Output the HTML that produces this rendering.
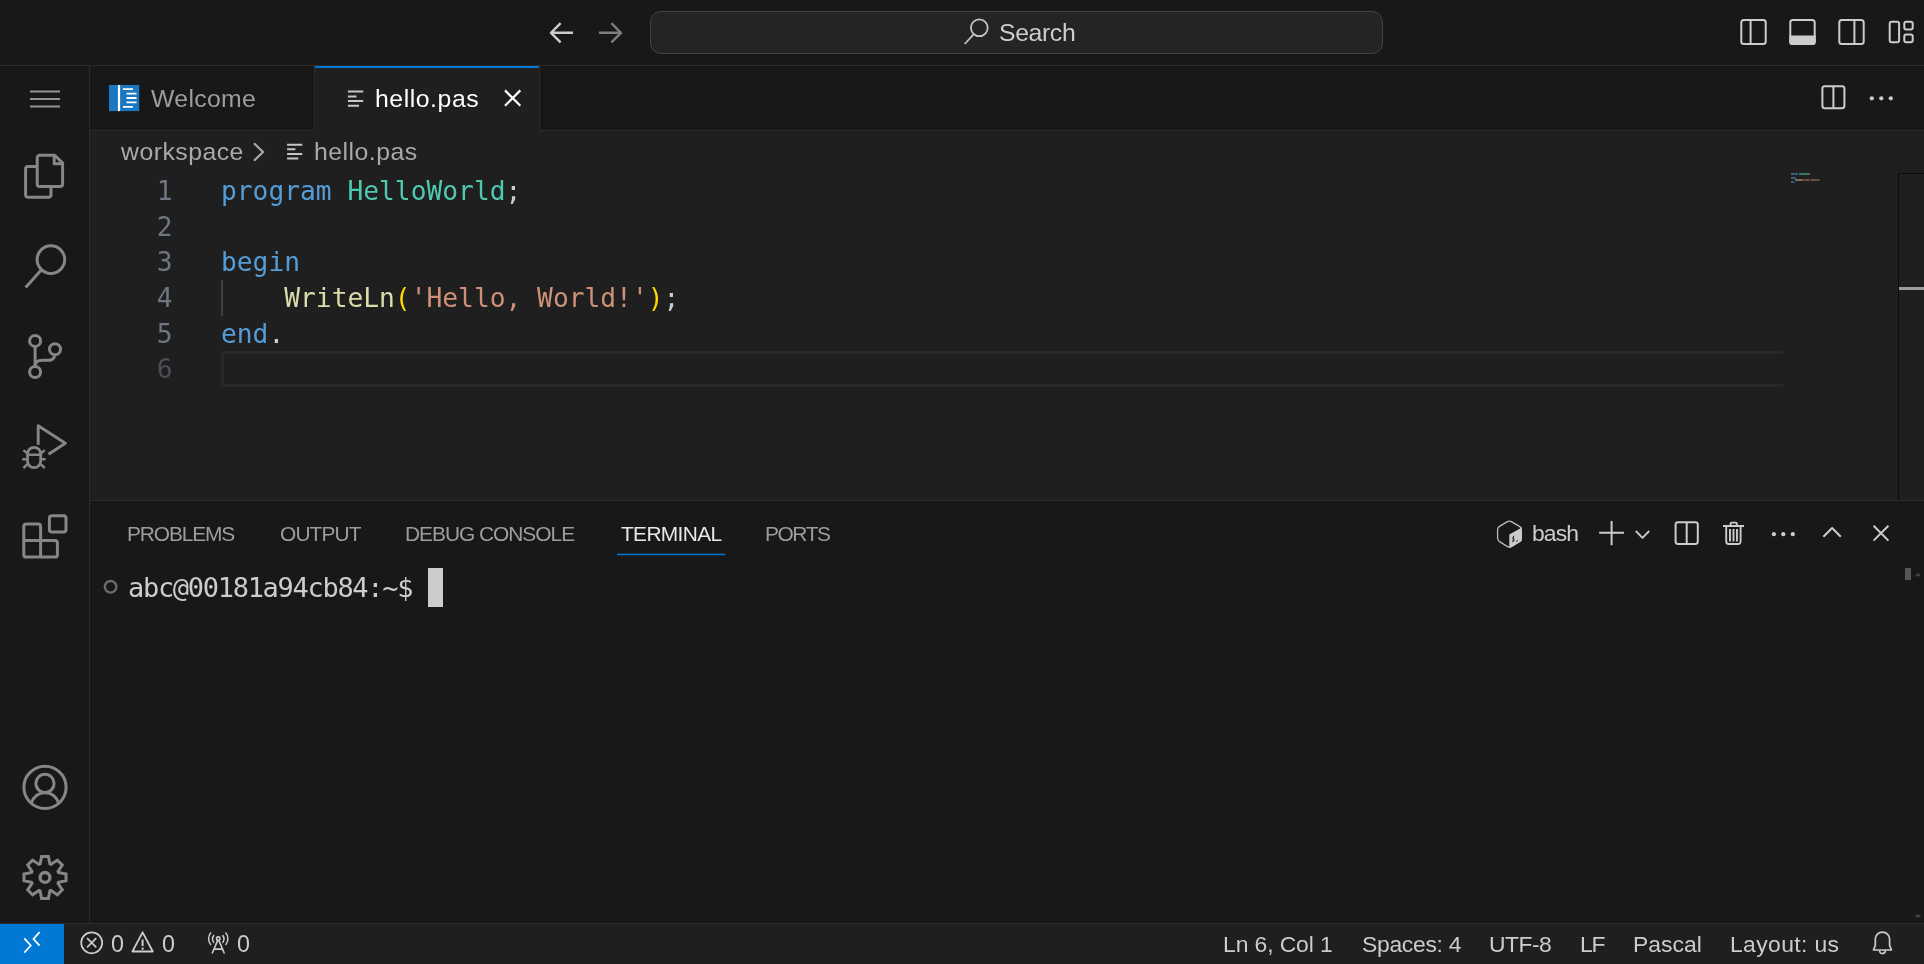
<!DOCTYPE html>
<html lang="en">
<head>
<meta charset="utf-8">
<title>hello.pas - workspace</title>
<style>
html,body{margin:0;padding:0;background:#181818;overflow:hidden;}
body{width:1924px;height:964px;position:relative;font-family:"Liberation Sans",sans-serif;color:#cccccc;-webkit-font-smoothing:antialiased;}
.abs,.t,.m,svg.i,.box{position:absolute;}
.t,.m{will-change:transform;}
.t{white-space:pre;line-height:1;font-size:25.3px;color:#cccccc;}
.t.p{font-size:21.4px;}.t.s{font-size:23.4px;}
.m{white-space:pre;line-height:1;font-family:"DejaVu Sans Mono","Liberation Mono",monospace;font-size:26.25px;}
svg.i{overflow:visible;fill:none;stroke:#868686;stroke-width:3;stroke-linecap:butt;stroke-linejoin:round;}
/* regions */
#titlebar{left:0;top:0;width:1924px;height:65px;background:#181818;border-bottom:1px solid #2b2b2b;}
#activity{left:0;top:66px;width:89px;height:857px;background:#181818;border-right:1px solid #2b2b2b;}
#tabs{left:90px;top:66px;width:1834px;height:64px;background:#181818;border-bottom:1px solid #2b2b2b;}
#editor{left:90px;top:131px;width:1834px;height:369px;background:#1f1f1f;}
#panel{left:90px;top:500px;width:1834px;height:423px;background:#181818;border-top:1px solid #2b2b2b;box-sizing:border-box;}
#status{left:0;top:923px;width:1924px;height:41px;background:#1f1f1f;border-top:1px solid #2b2b2b;box-sizing:border-box;}
</style>
</head>
<body>
<div id="titlebar" class="abs"></div>
<div id="activity" class="abs"></div>
<div id="tabs" class="abs"></div>
<div id="editor" class="abs"></div>
<div id="panel" class="abs"></div>
<div id="status" class="abs"></div>
<!--TITLEBAR-->
<svg class="i" style="left:540px;top:13px;stroke:#cccccc;stroke-width:2.4" width="40" height="40" viewBox="540 13 40 40"><path d="M573 32.8H551.5M560.6 23.2L551 32.8L560.6 42.4"/></svg>
<svg class="i" style="left:590px;top:13px;stroke:#7d7d7d;stroke-width:2.4" width="40" height="40" viewBox="590 13 40 40"><path d="M599 32.8H620.5M611.4 23.2L621 32.8L611.4 42.4"/></svg>
<div class="box" style="left:650px;top:11px;width:733px;height:43px;box-sizing:border-box;border:1px solid #434343;border-radius:11px;background:#242424;"></div>
<svg class="i" style="left:960px;top:16px;stroke:#c4c4c4;stroke-width:1.8" width="32" height="32" viewBox="960 16 32 32"><circle cx="979.3" cy="27.8" r="8.4"/><path d="M973.4 34.6L964.7 44"/></svg>
<div class="t" id="t_search" style="left:998.51px;top:21.40px;font-size:24.80px;letter-spacing:-0.379px;">Search</div>
<svg class="i" style="left:1736px;top:16px;stroke:#cccccc;stroke-width:2" width="180" height="32" viewBox="1736 16 180 32">
<rect x="1741.3" y="20" width="24.4" height="24" rx="2.5"/><path d="M1750.6 20V44"/>
<rect x="1790.3" y="20" width="24.4" height="24" rx="2.5"/><path d="M1790.3 36.5H1814.7V42a2 2 0 0 1-2 2H1792.3a2 2 0 0 1-2-2Z" fill="#cccccc"/>
<rect x="1839.3" y="20" width="24.4" height="24" rx="2.5"/><path d="M1854.4 20V44"/>
<rect x="1889.7" y="21.8" width="9.4" height="20.4" rx="2"/><rect x="1904.3" y="21.8" width="8.4" height="7.6" rx="2"/><rect x="1904.3" y="34.6" width="8.4" height="7.6" rx="2"/>
</svg>
<!--ACTIVITY-->
<svg class="i" style="left:0;top:66px;" width="90" height="858" viewBox="0 66 90 858">
<!-- menu -->
<path d="M30 91.4H60M30 99H60M30 106.4H60" stroke-width="2.05" stroke="#949494"/>
<!-- files -->
<path d="M37.2 166.6H28a2.4 2.4 0 0 0-2.4 2.4V194.9a2.4 2.4 0 0 0 2.4 2.4H48.6a2.4 2.4 0 0 0 2.4-2.4V186.4"/>
<path d="M54.8 155.3H39.6a2.4 2.4 0 0 0-2.4 2.4V184a2.4 2.4 0 0 0 2.4 2.4H60.2a2.4 2.4 0 0 0 2.4-2.4V163.1ZM54.2 155.6V163.7H62.3"/>
<!-- search -->
<circle cx="50.9" cy="259.6" r="13.8"/><path d="M41 270.3L25.6 287.4"/>
<!-- scm -->
<circle cx="35.100" cy="340.900" r="5.500"/><circle cx="35.100" cy="372" r="5.500"/><circle cx="55" cy="349.300" r="5.500"/>
<path d="M35.100 346.400V366.500M54.700 354.800c-.300 3.600-2.600 5.500-6.400 5.500H42.200c-4.200 0-7.100 1.900-7.100 5.900"/>
<!-- debug -->
<path d="M38.2 444.8V425.8L65.4 443.2L48.5 454.3" stroke-width="2.9"/>
<rect x="27.5" y="447.3" width="13.2" height="20.3" rx="6.6" ry="6.6" stroke-width="2.8"/>
<path d="M27.4 454.8H40.8M22.2 459.3H26.3M41.9 459.3H45.6M23.4 450.2L27.2 453.4M44.8 450.2L41 453.4M23.4 468L27.6 464.2M44.8 468L40.6 464.2" stroke-width="2.4"/>
<!-- extensions -->
<path d="M40.600 540.500V526.400a2.400 2.400 0 0 0-2.400-2.400H26.200a2.400 2.400 0 0 0-2.400 2.400V554.700a2.400 2.400 0 0 0 2.400 2.400H55a2.400 2.400 0 0 0 2.400-2.400V542.900a2.400 2.400 0 0 0-2.400-2.400H23.800M40.600 540.500V557.100"/>
<rect x="49.400" y="515.700" width="16.600" height="16.300" rx="2.400"/>
<!-- account -->
<circle cx="45" cy="787.3" r="21.1"/><circle cx="45" cy="783.4" r="9.1"/>
<path d="M31.2 803.4C33.4 797 38.4 792.8 45 792.8S56.6 797 58.8 803.4"/>
<!-- gear -->
<g transform="translate(45 877.4)" stroke-linejoin="miter"><circle r="4.9" stroke-width="3.3"/>
<path id="gearp" d="M-4.9 -13.4L-3.4 -21.0L3.4 -21.0L4.9 -13.4L6.0 -13.0L12.4 -17.3L17.3 -12.4L13.0 -6.0L13.4 -4.9L21.0 -3.4L21.0 3.4L13.4 4.9L13.0 6.0L17.3 12.4L12.4 17.3L6.0 13.0L4.9 13.4L3.4 21.0L-3.4 21.0L-4.9 13.4L-6.0 13.0L-12.4 17.3L-17.3 12.4L-13.0 6.0L-13.4 4.9L-21.0 3.4L-21.0 -3.4L-13.4 -4.9L-13.0 -6.0L-17.3 -12.4L-12.4 -17.3L-6.0 -13.0Z"/>
</g>
</svg>
<!--TABS-->
<div class="box" style="left:314px;top:66px;width:1px;height:64px;background:#2b2b2b;"></div>
<div class="box" style="left:315px;top:66px;width:224px;height:65px;background:#1f1f1f;"></div>
<div class="box" style="left:315px;top:66px;width:224px;height:2px;background:#0078d4;"></div>
<div class="box" style="left:539px;top:66px;width:1px;height:64px;background:#2b2b2b;"></div>
<!-- welcome icon -->
<svg class="i" style="left:109px;top:85px;stroke:none" width="31" height="27" viewBox="0 0 31 27"><rect width="30.2" height="26.1" fill="#1a78c2"/><rect x="8.9" y="0" width="2.2" height="26.1" fill="#ffffff"/><path d="M13.9 4.15H24M17.5 8.6H27.5M17.5 13H27.5M17.5 17.35H27.5M13.9 21.8H24" stroke="#ffffff" stroke-width="1.8"/></svg>
<div class="t" id="t_welcome" style="left:150.80px;top:87.20px;color:#9d9d9d;font-size:24.80px;letter-spacing:0.315px;">Welcome</div>
<svg class="i" style="left:347px;top:88px;stroke:#c8c8c8;stroke-width:2" width="20" height="22" viewBox="347 88 20 22"><path d="M347.9 91.6H363.2M347.9 96.4H356.5M347.9 101.1H363.2M347.9 105.7H359"/></svg>
<div class="t" id="t_tabhello" style="left:374.51px;top:87.20px;color:#ffffff;font-size:24.80px;letter-spacing:0.545px;">hello.pas</div>
<svg class="i" style="left:500px;top:86px;stroke:#ffffff;stroke-width:2.2" width="26" height="26" viewBox="500 86 26 26"><path d="M505 90.4L520.3 105.7M520.3 90.4L505 105.7"/></svg>
<svg class="i" style="left:1816px;top:80px;stroke:#cccccc;stroke-width:2" width="90" height="36" viewBox="1816 80 90 36"><rect x="1822.4" y="86.2" width="22" height="22" rx="2.4"/><path d="M1833.4 86.2V108.2"/><g fill="#cccccc" stroke="none"><circle cx="1871.8" cy="98.3" r="2.1"/><circle cx="1881.3" cy="98.3" r="2.1"/><circle cx="1890.8" cy="98.3" r="2.1"/></g></svg>
<!--EDITOR-->
<div class="t" id="t_bcws" style="left:121.05px;top:140.00px;color:#a9a9a9;font-size:24.80px;letter-spacing:0.476px;">workspace</div>
<svg class="i" style="left:248px;top:138px;stroke:#a9a9a9;stroke-width:2.2" width="22" height="28" viewBox="248 138 22 28"><path d="M254 143.3L263 152L254 160.7"/></svg>
<svg class="i" style="left:286px;top:141px;stroke:#c5c5c5;stroke-width:2" width="20" height="22" viewBox="286 141 20 22"><path d="M287.1 144.7H302.3M287.1 149.2H295.4M287.1 153.9H302.3M287.1 158.6H298.3"/></svg>
<div class="t" id="t_bchello" style="left:313.51px;top:140.00px;color:#a9a9a9;font-size:24.80px;letter-spacing:0.495px;">hello.pas</div>
<!-- current line -->
<div class="box" style="left:221px;top:351px;width:1562px;height:36px;box-sizing:border-box;border:3px solid #282828;border-right:0;"></div>
<div class="box" style="left:221px;top:280px;width:2px;height:36px;background:#404040;"></div>
<div class="m ln" style="left:140px;top:174px;width:32.6px;text-align:right;color:#6e7681;line-height:35.625px;">1
2
3
4
5
<span style="color:#4a4f56">6</span></div>
<div class="m" id="code" style="left:221px;top:174px;color:#cccccc;line-height:35.625px;"><span style="color:#569cd6">program</span> <span style="color:#4ec9b0">HelloWorld</span>;

<span style="color:#569cd6">begin</span>
    <span style="color:#dcdcaa">WriteLn</span><span style="color:#ffd700">(</span><span style="color:#ce9178">'Hello, World!'</span><span style="color:#ffd700">)</span>;
<span style="color:#569cd6">end</span>.
</div>
<!-- minimap -->
<svg class="i" style="left:1788px;top:170px;stroke:none" width="40" height="16" viewBox="1788 170 40 16"><g opacity="0.5"><rect x="1791" y="173" width="7" height="2" fill="#569cd6"/><rect x="1799" y="173" width="10" height="2" fill="#4ec9b0"/><rect x="1809" y="173" width="1" height="2" fill="#999"/>
<rect x="1791" y="177" width="5" height="2" fill="#569cd6"/>
<rect x="1795" y="179" width="7" height="2" fill="#c5c59a"/><rect x="1802" y="179" width="1" height="2" fill="#c9ae00"/><rect x="1803.5" y="179" width="6" height="2" fill="#b5806b"/><rect x="1810.5" y="179" width="7" height="2" fill="#b5806b"/><rect x="1817.5" y="179" width="2" height="2" fill="#999"/>
<rect x="1791" y="181" width="3" height="2" fill="#569cd6"/><rect x="1794" y="182" width="1" height="1" fill="#999"/></g></svg>
<!-- scrollbar -->
<div class="box" style="left:1898px;top:173px;width:26px;height:327px;box-sizing:border-box;border-left:1px solid #0c0c0e;border-top:1px solid #0c0c0e;"></div>
<div class="box" style="left:1899px;top:287px;width:25px;height:3px;background:#9c9c9c;"></div>
<!--PANEL-->
<div class="t p" id="t_problems" style="left:126.53px;top:524.30px;color:#9d9d9d;font-size:20.90px;letter-spacing:-1.128px;">PROBLEMS</div>
<div class="t p" id="t_output" style="left:279.56px;top:524.30px;color:#9d9d9d;font-size:20.90px;letter-spacing:-0.869px;">OUTPUT</div>
<div class="t p" id="t_debug" style="left:405.23px;top:524.30px;color:#9d9d9d;font-size:20.90px;letter-spacing:-1.016px;">DEBUG CONSOLE</div>
<div class="t p" id="t_terminal" style="left:620.58px;top:524.30px;color:#e7e7e7;font-size:20.90px;letter-spacing:-0.644px;">TERMINAL</div>
<div class="t p" id="t_ports" style="left:765.33px;top:524.30px;color:#9d9d9d;font-size:20.90px;letter-spacing:-1.419px;">PORTS</div>
<svg class="i" style="left:616px;top:552px;stroke:none" width="110" height="4" viewBox="616 552 110 4"><rect x="616.9" y="553.7" width="108.3" height="1.5" fill="#0078d4"/></svg>
<svg class="i" style="left:1490px;top:516px;stroke:#cccccc;stroke-width:2" width="410" height="36" viewBox="1490 516 410 36">
<!-- bash cube -->
<path d="M1507.5 521.6Q1509.4 520.5 1511.3 521.6L1519.5 526.4Q1521.4 527.5 1521.4 529.7L1521.4 538.3Q1521.4 540.5 1519.5 541.6L1511.3 546.6Q1509.4 547.7 1507.5 546.6L1499.5 541.6Q1497.6 540.5 1497.6 538.3L1497.6 529.7Q1497.6 527.5 1499.5 526.4Z" stroke="#bdbdbd" stroke-width="1.25"/>
<path d="M1509.3 534.6L1521.8 527.5V540.3a1 1 0 0 1-.5 .9L1510.6 547.6a.9 .9 0 0 1-1.3-.8Z" fill="#cacaca" stroke="none"/>
<path d="M1514 536.6c-1.500 .600-1.700 1.800-.500 2.300c1.300 .500 1.200 1.700-.500 2.500M1513.800 535.800l-1.100 6.400M1516.200 541.400l1.800-.800" stroke="#1f1f1f" stroke-width="0.900"/>
<!-- plus -->
<path d="M1599.2 532.8H1624M1611.6 521V545.2"/>
<!-- chevron down -->
<path d="M1635.8 531L1642.5 537.9L1649.2 531" stroke-width="1.8"/>
<!-- split -->
<rect x="1675.6" y="522.2" width="22.2" height="21.8" rx="2.4"/><path d="M1686.7 522.2V544"/>
<!-- trash -->
<path d="M1723 526H1744M1730.6 525.6V523.6a1 1 0 0 1 1-1H1735.8a1 1 0 0 1 1 1V525.6M1726.2 526.4V541.6a2.4 2.4 0 0 0 2.4 2.4H1738.2a2.4 2.4 0 0 0 2.4-2.4V526.4M1730 529V541.4M1733.5 529V541.4M1737 529V541.4" stroke-width="1.9"/>
<g fill="#cccccc" stroke="none"><circle cx="1773.9" cy="534.2" r="2.1"/><circle cx="1783.3" cy="534.2" r="2.1"/><circle cx="1792.8" cy="534.2" r="2.1"/></g>
<!-- chevron up -->
<path d="M1823.4 536.8L1832.1 528L1840.8 536.8"/>
<!-- close -->
<path d="M1873.6 525.8L1888.4 540.6M1888.4 525.8L1873.6 540.6"/>
</svg>
<div class="t" id="t_bash" style="left:1531.93px;top:521.90px;color:#cccccc;font-size:22.90px;letter-spacing:-0.899px;">bash</div>
<!-- terminal -->
<svg class="i" style="left:100px;top:576px;stroke:#6a6a6a;stroke-width:2.4" width="22" height="22" viewBox="100 576 22 22"><circle cx="110.6" cy="586.8" r="5.8"/></svg>
<div class="m" id="term" style="left:128.2px;top:574px;color:#cccccc;font-size:27px;letter-spacing:-1.3px;">abc@00181a94cb84:~$</div>
<div class="box" style="left:428px;top:568px;width:15px;height:39px;background:#cccccc;"></div>
<div class="box" style="left:1905px;top:568px;width:6px;height:12px;background:#565656;"></div>
<svg class="i" style="left:1913px;top:570px;stroke:none;fill:#464646" width="10" height="10" viewBox="0 0 10 10"><path d="M1.800 6.200L5 2.800L8.200 6.200Z"/></svg>
<svg class="i" style="left:1913px;top:911px;stroke:none;fill:#464646" width="10" height="10" viewBox="0 0 10 10"><path d="M1.800 3.800L5 7.200L8.200 3.800Z"/></svg>
<!--STATUS-->
<div class="box" style="left:0;top:924px;width:64px;height:40px;background:#0078d4;"></div>
<svg class="i" style="left:0;top:924px;stroke:#ffffff;stroke-width:1.7" width="260" height="40" viewBox="0 924 260 40">
<path d="M24.3 938.4L30.8 945.5L24.3 952.6M39.6 932.2L33.4 938.9L39.6 945.6" stroke-linejoin="miter"/>
<g stroke="#cccccc" stroke-width="1.7">
<circle cx="91.7" cy="942.8" r="10.5"/><path d="M87.1 938.2L96.3 947.4M96.3 938.2L87.1 947.4"/>
<path d="M142.6 932.3L152.8 951.5H132.4Z" stroke-width="1.8"/><path d="M142.6 939.4V946M142.6 947.6V949.7" stroke-width="2"/>
<!-- radio tower -->
<circle cx="218.25" cy="938.6" r="1.75" stroke-width="1.6"/><path d="M217.6 940.6L212.1 953.5M218.9 940.6L224.4 953.5M214.3 949.1H222.2" stroke-width="1.6"/>
<path d="M214.1 935.1a5.55 5.55 0 0 0 0 7.8M222.4 935.1a5.55 5.55 0 0 1 0 7.8M211 932.4a9.6 9.6 0 0 0 0 12.7M225.5 932.4a9.6 9.6 0 0 1 0 12.7" stroke-width="1.5"/>
</g>
</svg>
<div class="t s" id="t_e0" style="left:111.10px;top:933.20px;font-size:23.30px;letter-spacing:-0.017px;">0</div>
<div class="t s" id="t_w0" style="left:161.80px;top:933.20px;font-size:23.30px;letter-spacing:0.083px;">0</div>
<div class="t s" id="t_r0" style="left:236.70px;top:933.20px;font-size:23.30px;letter-spacing:0.283px;">0</div>
<div class="t s" id="t_ln" style="left:1222.57px;top:933.20px;font-size:22.90px;letter-spacing:-0.097px;">Ln 6, Col 1</div>
<div class="t s" id="t_spaces" style="left:1362.08px;top:933.20px;font-size:22.90px;letter-spacing:-0.291px;">Spaces: 4</div>
<div class="t s" id="t_utf" style="left:1489.40px;top:933.20px;font-size:22.90px;letter-spacing:-0.536px;">UTF-8</div>
<div class="t s" id="t_lf" style="left:1580.17px;top:933.20px;font-size:22.90px;letter-spacing:-1.186px;">LF</div>
<div class="t s" id="t_pascal" style="left:1633.17px;top:933.20px;font-size:22.90px;letter-spacing:0.004px;">Pascal</div>
<div class="t s" id="t_layout" style="left:1730.17px;top:933.20px;font-size:22.90px;letter-spacing:0.372px;">Layout: us</div>
<svg class="i" style="left:1868px;top:926px;stroke:#cccccc;stroke-width:1.7" width="30" height="34" viewBox="1868 926 30 34"><path d="M1873.5 950L1875.3 945.4V939.3a7.150 7.200 0 0 1 14.300 0V945.4L1891.400 950Z"/><path d="M1879.500 950.600a2.900 3 0 0 0 5.800 0"/></svg>
</body>
</html>
